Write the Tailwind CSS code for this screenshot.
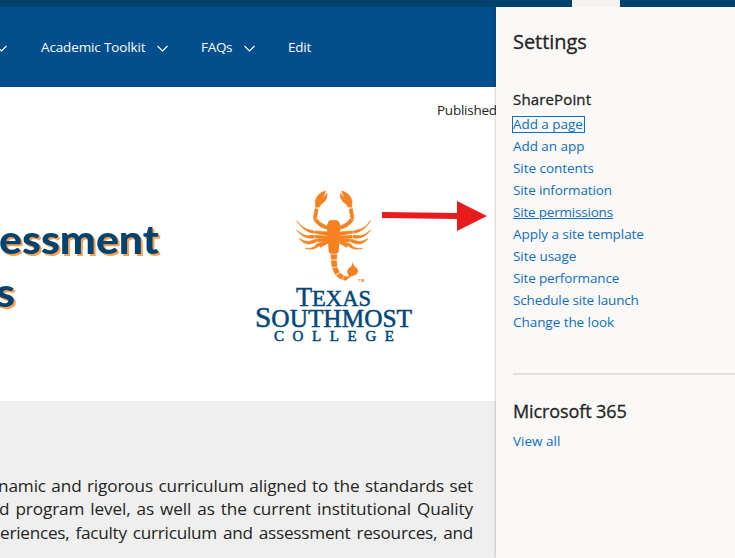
<!DOCTYPE html>
<html lang="en">
<head>
<meta charset="utf-8">
<title>Settings</title>
<script src="https://cdn.jsdelivr.net/npm/@tailwindcss/browser@4"></script>
</head>
<body class="w-[735px] h-[558px] overflow-hidden bg-white font-['Open_Sans','Noto_Sans',sans-serif] text-[#242424] flex flex-col">
<header class="h-[7px] shrink-0 bg-[#00416d] flex"><div class="ml-[572px] w-12 h-full bg-[#f3f2f1]"></div></header>
<div class="flex flex-1 min-h-0">
  <main class="w-[496px] shrink-0 overflow-hidden flex flex-col">
    <nav class="h-20 shrink-0 bg-[#004e8c] text-white text-[13.5px] flex items-center whitespace-nowrap">
      <svg class="w-[7px] h-3 mr-[34px] shrink-0 mt-px" viewBox="4 0 7 12" fill="none" stroke="currentColor" stroke-width="1.1"><path d="M.5 4l5 5 5-5"/></svg>
      <span class="w-[104px] mr-[12px] tracking-[-0.13px] mt-px">Academic Toolkit</span>
      <svg class="w-[11px] h-3 mr-[33px] shrink-0 mt-px" viewBox="0 0 11 12" fill="none" stroke="currentColor" stroke-width="1.1"><path d="M.5 4l5 5 5-5"/></svg>
      <span class="w-[31px] mr-[12px] tracking-[-0.3px] mt-px">FAQs</span>
      <svg class="w-[11px] h-3 mr-[33px] shrink-0 mt-px" viewBox="0 0 11 12" fill="none" stroke="currentColor" stroke-width="1.1"><path d="M.5 4l5 5 5-5"/></svg>
      <span class="tracking-[-0.2px] mt-px">Edit</span>
    </nav>
    <div class="h-[46px] shrink-0 pt-[13px] pl-[437px] text-[13.5px] leading-[20px] tracking-[-0.25px] whitespace-nowrap">Published</div>
    <section class="h-[268px] shrink-0">
      <svg class="w-[496px] h-[268px]" viewBox="0 133 496 268">
        <g class="[filter:drop-shadow(2px_2px_0_#f9a153)]" fill="#00436f" font-family="Lato, sans-serif" font-weight="900" font-size="39">
          <text x="-1" y="253.500" textLength="160" lengthAdjust="spacingAndGlyphs">essment</text>
          <text x="-4" y="307" textLength="19" lengthAdjust="spacingAndGlyphs">s</text>
        </g>
        <g transform="translate(290 185) scale(.33333)" fill="#f58220">
          <path d="M118 108q13-3 26 0l6 13-6 82q-13 5-26 0l-6-82z" stroke="#f58220" stroke-width="3"/>
          <g id="side" stroke="#f58220" stroke-width="2">
            <path d="M107 18Q82 24 76 47l1 20 11-1q4-10 13-14 12-11 10-27l-13 17z"/>
            <path d="M75 71l9 1-4 28-10 1z"/>
            <path d="M71 104l11-2q9 14 29 21l1 10Q86 128 71 104z"/>
            <path d="M20 107q12 17 29 25l23 6-2 7q-32-7-50-38zM75 138l39 3v11l-41-8z"/>
            <path d="M20 135q15 15 30 17l23-1v8q-31 6-53-24zM76 151l38 3v7l-38-2z"/>
            <path d="M28 161q17 10 31 8l20-7 3 7q-31 20-54-8zM82 162l32-1v7l-30 3z"/>
            <path d="M45 190q18 2 27-4l11-11 7 5q-17 18-45 10zM86 175l28-9v9l-23 12z"/>
          </g>
          <use href="#side" transform="matrix(-1 0 0 1 262 0)"/>
          <path d="M122 209h19l-1 14h-16zM124 227h16l1 17-15 2zM127 250l14-3 7 14-12 8zM139 272l11-8 11 8-5 11q-10-2-17-11zM163 274l14 2-6 8q-7 4-12 0z" stroke="#f58220" stroke-width="1.5"/>
          <path d="M186 222q0 14 9 23 13 8 7 20-7 10-18 8-7 8-10 5l2-7q-10-14 2-23 12-5 8-26z"/>
          <text x="204" y="290" font-family="Inter, sans-serif" font-weight="700" font-size="11" textLength="19">TM</text>
        </g>
        <g fill="#00467a" stroke="#00467a" stroke-width=".5" font-family="'Liberation Serif', serif">
          <text x="296" y="305.500" font-size="28" textLength="75" lengthAdjust="spacingAndGlyphs">T<tspan font-size="24">EXAS</tspan></text>
          <text x="255" y="327" font-size="29" textLength="157" lengthAdjust="spacingAndGlyphs">S<tspan font-size="25">OUTHMOST</tspan></text>
          <text x="274" y="341" font-size="15" textLength="120">COLLEGE</text>
        </g>
        <path fill="#e81b1d" d="M382 212l75 1v-12l30 15-30 15v-12l-75-1z"/>
      </svg>
    </section>
    <section class="flex-1 bg-[#efefef] pt-[72.500px] flex flex-col items-end pr-[23px] text-[17.2px] leading-[23.500px] tracking-[-0.12px] whitespace-nowrap">
      <p class="w-[475px] [text-align-last:justify]">namic and rigorous curriculum aligned to the standards set</p>
      <p class="w-[474px] [text-align-last:justify]">d program level, as well as the current institutional Quality</p>
      <p class="w-[473px] [text-align-last:justify] tracking-[-0.25px]">eriences, faculty curriculum and assessment resources, and</p>
    </section>
  </main>
  <aside class="relative flex-1 bg-[#faf9f8] pl-[17px] shadow-[0_0_3px_rgba(0,0,0,0.3)] [clip-path:inset(0_0_0_-6px)] whitespace-nowrap">
    <h1 class="pt-[21px] text-[20px] leading-[28px] [-webkit-text-stroke:0.3px] tracking-[-0.05px]">Settings</h1>
    <h2 class="mt-[33px] text-[15px] leading-[20px] [-webkit-text-stroke:0.3px] tracking-[0.15px]">SharePoint</h2>
    <ul class="mt-[4px] text-[13.5px] leading-[22px] text-[#106ebe] tracking-[-0.05px]">
      <li><span class="outline outline-[#106ebe] inline-block leading-[15px] h-[15px] w-[71px]">Add a page</span></li>
      <li>Add an app</li>
      <li>Site contents</li>
      <li class="tracking-[-0.15px]">Site information</li>
      <li class="underline tracking-[-0.2px]">Site permissions</li>
      <li>Apply a site template</li>
      <li>Site usage</li>
      <li class="tracking-[-0.15px]">Site performance</li>
      <li class="tracking-[-0.15px]">Schedule site launch</li>
      <li>Change the look</li>
    </ul>
    <hr class="mt-[40px] border-0 h-[2px] bg-[#e1dfdd]">
    <h2 class="mt-[23px] text-[18px] leading-[26px] tracking-[-0.1px] [-webkit-text-stroke:0.3px]">Microsoft 365</h2>
    <a class="block mt-[6px] text-[13.5px] leading-[22px] text-[#106ebe]">View all</a>
  </aside>
</div>
</body>
</html>
